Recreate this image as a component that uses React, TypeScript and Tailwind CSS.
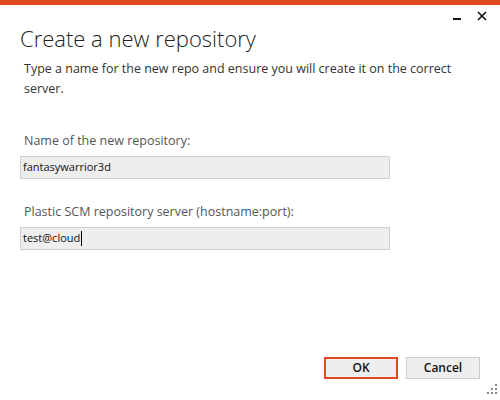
import React from "react";

const font = { fontFamily: '"Open Sans", "Noto Sans", sans-serif' };

function Field({ label, value, cursor }: { label: string; value: string; cursor?: boolean }) {
  return (
    <div className="flex flex-col">
      <label className="pl-[4px] text-[12.5px] leading-[18px] text-[#555555]">{label}</label>
      <div className="mt-[6px] flex h-[23px] w-[370px] items-center border border-[#cfcfcf] bg-[#eeeeee] pl-[2px] text-[11px] text-[#111111]">
        <span>{value}</span>
        {cursor && <span className="ml-[1px] inline-block h-[15px] w-px bg-black" />}
      </div>
    </div>
  );
}

export default function App() {
  return (
    <div className="relative flex h-[400px] w-[500px] flex-col bg-white" style={font}>
      <div className="h-[5px] bg-[#e04a1f]" />

      <div className="flex h-[16px] items-start justify-end gap-[16px] pr-[13px] pt-[6px]">
        <span className="mt-[7px] block h-[2px] w-[8px] bg-[#111111]" />
        <svg width="10" height="10" viewBox="0 0 10 10" className="block">
          <path d="M1 1 L9 9 M9 1 L1 9" stroke="#111111" strokeWidth="1.6" />
        </svg>
      </div>

      <div className="flex flex-1 flex-col px-[20px]">
        <h1 className="mt-[1px] text-[22px] font-light leading-[32px] text-[#222222]">Create a new repository</h1>
        <p className="mt-[5px] pl-[4px] text-[12.5px] leading-[20px] text-[#333333]">
          Type a name for the new repo and ensure you will create it on the correct server.
        </p>

        <div className="mt-[33px] flex flex-col gap-[24px]">
          <Field label="Name of the new repository:" value="fantasywarrior3d" />
          <Field label="Plastic SCM repository server (hostname:port):" value="test@cloud" cursor />
        </div>

        <div className="mt-auto mb-[21px] flex justify-end gap-[8px]">
          <button className="h-[22px] w-[74px] border-2 border-[#e04a1f] bg-[#eeeeee] text-[12px] font-semibold text-[#111111]">
            OK
          </button>
          <button className="h-[22px] w-[74px] border border-[#cccccc] bg-[#eeeeee] text-[12px] font-semibold text-[#111111]">
            Cancel
          </button>
        </div>
      </div>

      <svg width="12" height="12" viewBox="0 0 12 12" className="absolute bottom-[4px] right-[3px]">
        <rect x="10" y="0" width="2" height="2" fill="#8a8a8a" />
        <rect x="6" y="4" width="2" height="2" fill="#8a8a8a" />
        <rect x="10" y="4" width="2" height="2" fill="#8a8a8a" />
        <rect x="2" y="8" width="2" height="2" fill="#8a8a8a" />
        <rect x="6" y="8" width="2" height="2" fill="#8a8a8a" />
        <rect x="10" y="8" width="2" height="2" fill="#8a8a8a" />
      </svg>
    </div>
  );
}
